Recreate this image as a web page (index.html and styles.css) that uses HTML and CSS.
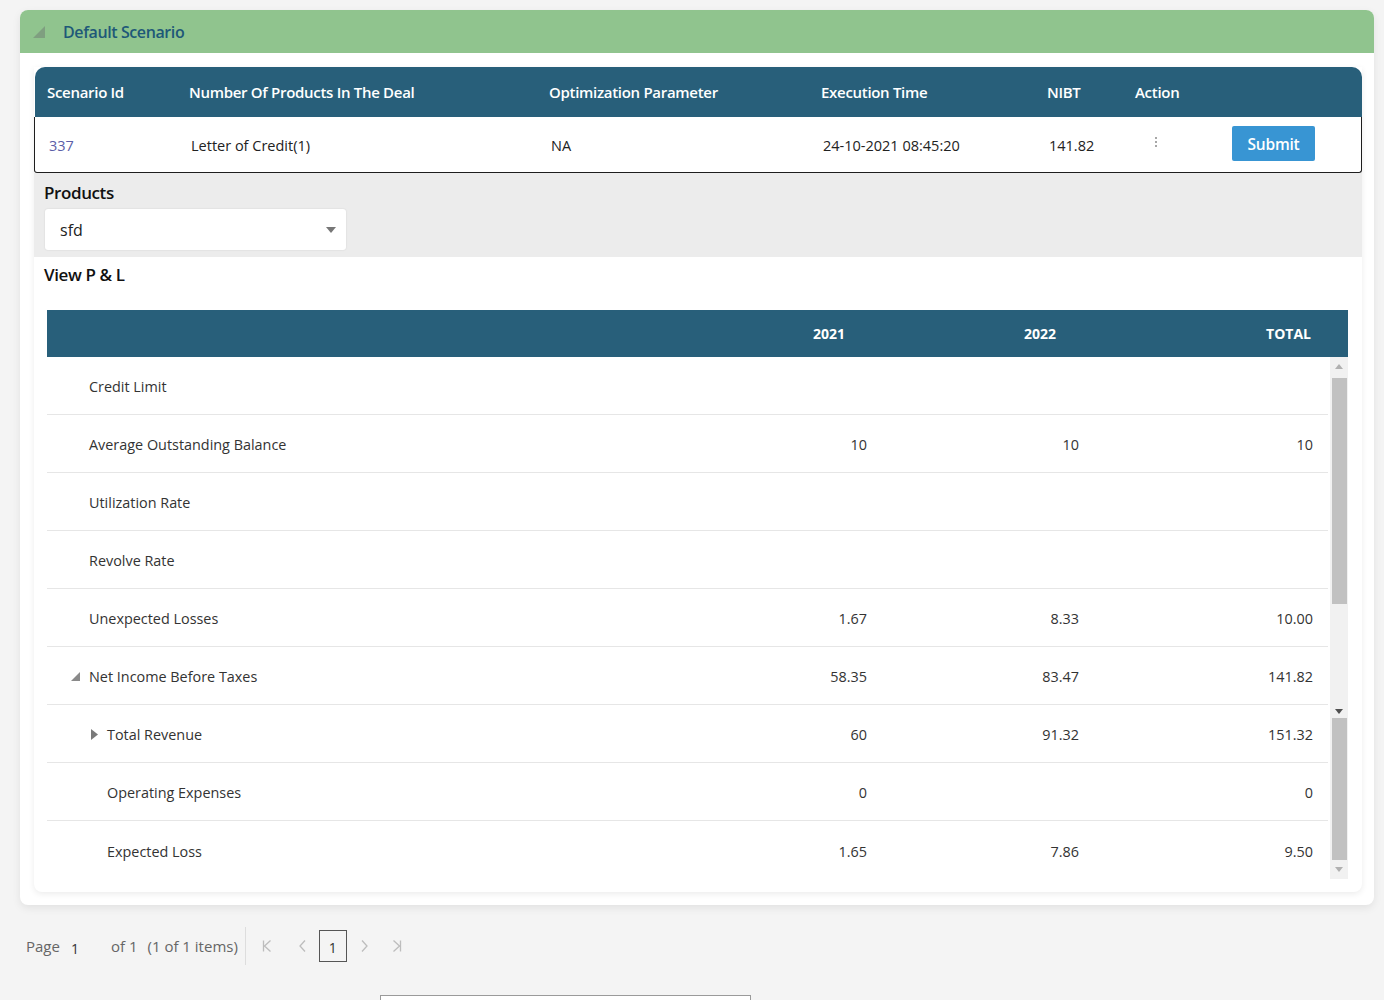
FILE: index.html
```html
<!DOCTYPE html>
<html lang="en">
<head>
<meta charset="utf-8">
<title>Default Scenario</title>
<link rel="stylesheet" href="styles.css">
</head>
<body>
<div class="page">
  <section class="panel">
    <header class="panel-head">
      <svg class="collapse-icon" width="12" height="12" viewBox="0 0 12 12"><polygon points="12,0 12,12 0,12" fill="#7f9f80"/></svg>
      <span class="panel-title">Default Scenario</span>
    </header>
    <div class="panel-body">
      <div class="card">
        <div class="grid-head">
          <div>Scenario Id</div>
          <div>Number Of Products In The Deal</div>
          <div>Optimization Parameter</div>
          <div>Execution Time</div>
          <div>NIBT</div>
          <div>Action</div>
        </div>
        <div class="grid-row">
          <div class="link">337</div>
          <div>Letter of Credit(1)</div>
          <div>NA</div>
          <div>24-10-2021 08:45:20</div>
          <div>141.82</div>
          <div class="action">
            <span class="kebab"><i></i><i></i><i></i></span>
            <button class="submit">Submit</button>
          </div>
        </div>
        <div class="products">
          <div class="section-label">Products</div>
          <div class="select">
            <span>sfd</span>
            <svg width="10" height="6" viewBox="0 0 10 6"><polygon points="0,0 10,0 5,6" fill="#777"/></svg>
          </div>
        </div>
        <div class="view-title">View P &amp; L</div>
        <div class="pl">
          <div class="pl-head">
            <div></div>
            <div class="num">2021</div>
            <div class="num">2022</div>
            <div class="num total">TOTAL</div>
          </div>
          <div class="pl-body">
            <div class="pl-rows">
              <div class="pl-row"><div class="lbl l0">Credit Limit</div><div class="num"></div><div class="num"></div><div class="num"></div></div>
              <div class="pl-row"><div class="lbl l0">Average Outstanding Balance</div><div class="num">10</div><div class="num">10</div><div class="num">10</div></div>
              <div class="pl-row"><div class="lbl l0">Utilization Rate</div><div class="num"></div><div class="num"></div><div class="num"></div></div>
              <div class="pl-row"><div class="lbl l0">Revolve Rate</div><div class="num"></div><div class="num"></div><div class="num"></div></div>
              <div class="pl-row"><div class="lbl l0">Unexpected Losses</div><div class="num">1.67</div><div class="num">8.33</div><div class="num">10.00</div></div>
              <div class="pl-row"><div class="lbl t0"><svg class="tri" width="9" height="9" viewBox="0 0 9 9"><polygon points="9,0 9,9 0,9" fill="#8a8a8a"/></svg>Net Income Before Taxes</div><div class="num">58.35</div><div class="num">83.47</div><div class="num">141.82</div></div>
              <div class="pl-row"><div class="lbl t1"><svg class="tri" width="7" height="11" viewBox="0 0 7 11"><polygon points="0,0 7,5.5 0,11" fill="#7a7a7a"/></svg>Total Revenue</div><div class="num">60</div><div class="num">91.32</div><div class="num">151.32</div></div>
              <div class="pl-row"><div class="lbl l1">Operating Expenses</div><div class="num">0</div><div class="num"></div><div class="num">0</div></div>
              <div class="pl-row"><div class="lbl l1">Expected Loss</div><div class="num">1.65</div><div class="num">7.86</div><div class="num">9.50</div></div>
            </div>
            <div class="scrollbar">
              <div class="sb-btn"><svg width="8" height="5" viewBox="0 0 8 5"><polygon points="0,5 8,5 4,0" fill="#b0b0b0"/></svg></div>
              <div class="sb-thumb one"></div>
              <div class="sb-track"></div>
              <div class="sb-btn small"><svg width="8" height="5" viewBox="0 0 8 5"><polygon points="0,0 8,0 4,5" fill="#505050"/></svg></div>
              <div class="sb-thumb two"></div>
              <div class="sb-btn"><svg width="8" height="5" viewBox="0 0 8 5"><polygon points="0,0 8,0 4,5" fill="#b0b0b0"/></svg></div>
            </div>
          </div>
        </div>
      </div>
    </div>
  </section>
  <nav class="pager">
    <span class="pg-text">Page</span>
    <span class="pg-num">1</span>
    <span class="pg-text of">of 1</span>
    <span class="pg-text items">(1 of 1 items)</span>
    <span class="pg-divider"></span>
    <svg class="pg-icon first" width="10" height="12" viewBox="0 0 10 12"><path d="M1.5 0.5V11.5M8.5 0.5L2.5 6L8.5 11.5" stroke="#bdbdbd" stroke-width="1.3" fill="none"/></svg>
    <svg class="pg-icon prev" width="7" height="12" viewBox="0 0 7 12"><path d="M6 0.5L1 6L6 11.5" stroke="#bdbdbd" stroke-width="1.3" fill="none"/></svg>
    <span class="pg-box">1</span>
    <svg class="pg-icon next" width="7" height="12" viewBox="0 0 7 12"><path d="M1 0.5L6 6L1 11.5" stroke="#bdbdbd" stroke-width="1.3" fill="none"/></svg>
    <svg class="pg-icon last" width="10" height="12" viewBox="0 0 10 12"><path d="M1.5 0.5L7.5 6L1.5 11.5M8.5 0.5V11.5" stroke="#bdbdbd" stroke-width="1.3" fill="none"/></svg>
  </nav>
  <div class="bottom-box"></div>
</div>
</body>
</html>
```

FILE: styles.css
```css
* { box-sizing: border-box; }
html, body { margin: 0; padding: 0; }
body {
  background: #f4f4f4;
  font-family: "Open Sans", "Noto Sans", sans-serif;
  color: #222;
  width: 1384px;
  height: 1000px;
  overflow: hidden;
}
.page { padding: 10px 10px 0 20px; }

.panel {
  width: 1354px;
  background: #fff;
  border-radius: 8px;
  box-shadow: 0 3px 8px rgba(0,0,0,0.08);
}
.panel-head {
  height: 43px;
  background: #90c48e;
  border-radius: 8px 8px 0 0;
  display: flex;
  align-items: center;
  padding-left: 13px;
}
.collapse-icon { margin-right: 18px; margin-top: 1px; }
.panel-title {
  color: #1e5878;
  font-size: 16px;
  font-weight: 600;
  letter-spacing: -0.4px;
}
.panel-body { padding: 14px 12px 13px 14px; }
.card {
  background: #fff;
  border-radius: 0 0 8px 8px;
  box-shadow: 0 2px 6px rgba(0,0,0,0.08);
  padding-bottom: 13px;
}

.grid-head, .grid-row {
  display: grid;
  grid-template-columns: 142px 360px 272px 226px 88px 1fr;
  align-items: center;
}
.grid-head {
  height: 50px;
  margin-left: 1px;
  background: #285f7a;
  border-radius: 10px 10px 0 0;
  padding-left: 12px;
  color: #fff;
  font-size: 15px;
  font-weight: 600;
  letter-spacing: -0.3px;
}
.grid-row {
  height: 56px;
  border: 1.5px solid #1e1e1e;
  border-top: 0;
  border-radius: 0 0 3px 3px;
  padding-left: 13px;
  font-size: 14.5px;
  letter-spacing: 0;
  color: #222;
}
.grid-row > div { padding-left: 1px; padding-top: 1px; }
.link { color: #5b5ea8; }
.action { display: flex; align-items: center; }
.kebab {
  display: flex;
  flex-direction: column;
  gap: 2px;
  margin-left: 18px;
  margin-top: -6px;
}
.kebab i { display: block; width: 2px; height: 2px; background: #8a8a8a; border-radius: 50%; }
.submit {
  margin-left: 75px;
  margin-top: -3px;
  width: 83px;
  height: 35px;
  background: #3895d3;
  color: #fff;
  border: 0;
  border-radius: 2px;
  font-family: "Open Sans", sans-serif;
  font-size: 15.5px;
  font-weight: 600;
  letter-spacing: -0.2px;
}

.products {
  background: #ececec;
  height: 84px;
  padding: 8px 0 0 10px;
}
.section-label, .view-title {
  font-size: 17px;
  font-weight: 600;
  letter-spacing: -0.4px;
  color: #111;
  line-height: 24px;
}
.select {
  margin-top: 4px;
  margin-left: 1px;
  width: 301px;
  height: 41px;
  background: #fff;
  border-radius: 3px;
  box-shadow: 0 0 2px rgba(0,0,0,0.12);
  display: flex;
  align-items: center;
  justify-content: space-between;
  padding: 0 10px 0 15px;
  font-size: 16px;
  color: #222;
}
.view-title { padding: 6px 0 0 10px; height: 53px; }

.pl { margin: 0 14px 0 13px; }
.pl-head, .pl-row {
  display: grid;
  grid-template-columns: 620px 220px 212px 1fr;
  align-items: center;
}
.pl-head {
  height: 47px;
  background: #285f7a;
  color: #fff;
  font-size: 14px;
  font-weight: 700;
}
.pl-head .num { text-align: right; padding-right: 42px; }
.pl-head .num:nth-child(3) { padding-right: 43px; }
.pl-head .num.total { padding-right: 37px; }
.pl-body { display: flex; }
.pl-rows { width: 1281px; }
.pl-row {
  height: 58px;
  border-bottom: 1px solid #e6e6e6;
  font-size: 14.4px;
  color: #333;
  padding-top: 2px;
}
.pl-row:last-child { border-bottom: 0; }
.pl-row .num { text-align: right; padding-right: 20px; }
.pl-row .num:last-child { padding-right: 15px; }
.lbl { display: flex; align-items: center; }
.lbl.l0 { padding-left: 42px; }
.lbl.l1 { padding-left: 60px; }
.lbl.t0 { padding-left: 24px; }
.lbl.t0 .tri { margin-right: 9px; }
.lbl.t1 { padding-left: 44px; }
.lbl.t1 .tri { margin-right: 9px; }

.scrollbar {
  width: 18px;
  margin-left: 2px;
  background: #f1f1f1;
  display: flex;
  flex-direction: column;
  align-items: center;
}
.sb-btn { height: 19px; display: flex; align-items: center; justify-content: center; }
.sb-btn.small { height: 11px; margin-bottom: 1px; }
.sb-thumb { width: 15px; background: #c1c1c1; }
.sb-thumb.one { height: 226px; margin-top: 2px; }
.sb-track { height: 102px; }
.sb-thumb.two { height: 142px; }

.pager {
  display: flex;
  align-items: center;
  height: 38px;
  margin-top: 22px;
  padding-left: 6px;
  color: #666;
  font-size: 15px;
}
.pg-num { font-size: 14px; color: #333; margin-left: 11px; margin-top: 4px; }
.pg-text.of { margin-left: 32px; }
.pg-text.items { margin-left: 10px; }
.pg-divider { width: 1px; height: 38px; background: #ddd; margin-left: 7px; }
.pg-icon.first { margin-left: 16px; }
.pg-icon.prev { margin-left: 27px; }
.pg-box {
  margin-left: 13px;
  width: 28px;
  height: 32px;
  border: 1px solid #555;
  display: flex;
  align-items: center;
  justify-content: center;
  font-size: 14px;
  color: #333;
  padding-top: 3px;
}
.pg-icon.next { margin-left: 14px; }
.pg-icon.last { margin-left: 24px; }
.bottom-box {
  margin: 30px 0 0 360px;
  width: 371px;
  height: 10px;
  border: 1px solid #9a9a9a;
  background: #fff;
}
```
